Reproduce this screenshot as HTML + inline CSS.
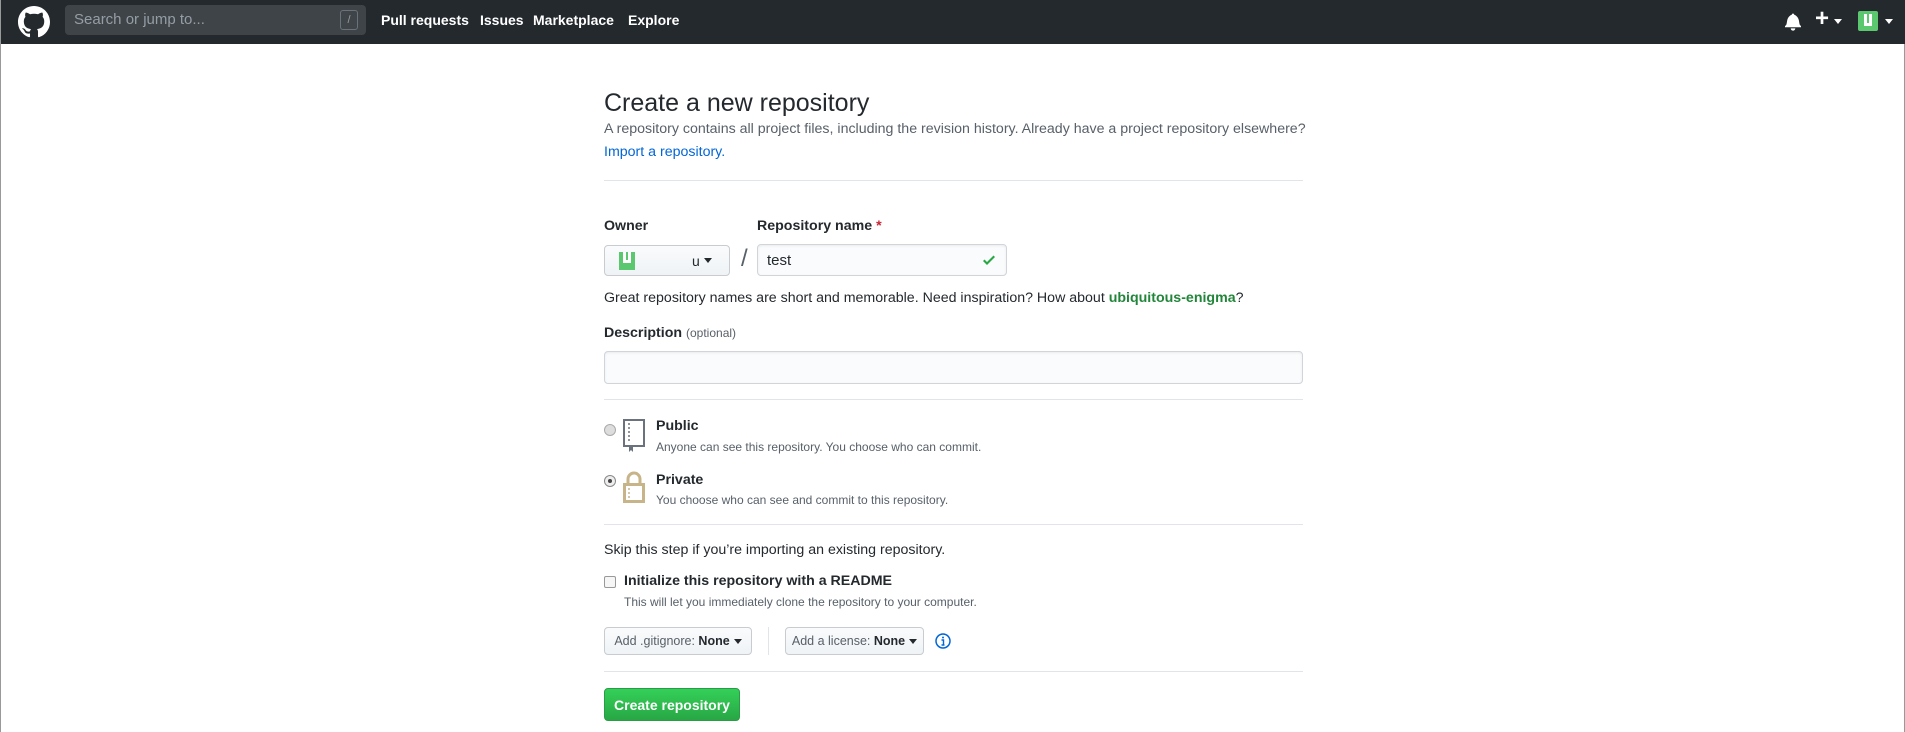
<!DOCTYPE html>
<html><head><meta charset="utf-8"><style>
*{box-sizing:border-box;margin:0;padding:0}
body{width:1905px;height:732px;overflow:hidden;background:#fff;font-family:"Liberation Sans",Arial,sans-serif;color:#24292e;position:relative;border-left:1px solid #999;border-right:1px solid #999}
.a{position:absolute;white-space:nowrap}
.hdr{position:absolute;left:0;top:0;width:1905px;height:44px;background:#24292e}
.hr{position:absolute;left:603px;width:699px;height:1px;background:#e1e4e8}
.btn{position:absolute;border:1px solid #c8ccd1;border-radius:4px;background:linear-gradient(#fafbfc,#eff3f6);font-size:14px;color:#24292e;display:flex;align-items:center;justify-content:center}
.caret{display:inline-block;border-left:4px solid transparent;border-right:4px solid transparent;border-top:5px solid #24292e;margin-left:4px}
.inp{position:absolute;border:1px solid #d1d5da;border-radius:4px;background:#fafbfc;box-shadow:inset 0 1px 2px rgba(27,31,35,.075)}
</style></head><body>
<div class="hdr"></div>
<svg class="a" style="left:17px;top:6px" width="32" height="32" viewBox="0 0 16 16"><path fill="#fff" d="M8 0C3.58 0 0 3.58 0 8c0 3.54 2.290 6.530 5.470 7.590.4.07.55-.17.55-.38 0-.19-.01-.82-.01-1.49-2.01.37-2.53-.49-2.69-.94-.09-.23-.48-.94-.82-1.130-.28-.15-.68-.52-.01-.53.63-.01 1.08.58 1.23.82.72 1.21 1.87.87 2.33.66.07-.52.28-.87.51-1.070-1.78-.2-3.64-.89-3.64-3.95 0-.87.31-1.59.82-2.15-.08-.2-.36-1.02.08-2.12 0 0 .67-.21 2.2.82.64-.18 1.32-.27 2-.27.68 0 1.36.09 2 .27 1.53-1.04 2.2-.82 2.2-.82.44 1.1.16 1.92.08 2.12.51.56.82 1.27.82 2.15 0 3.07-1.87 3.75-3.65 3.95.29.25.54.73.54 1.48 0 1.07-.01 1.93-.01 2.2 0 .21.15.46.55.38A8.013 8.013 0 0016 8c0-4.42-3.58-8-8-8z"/></svg>
<div class="a" style="left:64px;top:5px;width:301px;height:30px;background:#3f4448;border-radius:4px"></div>
<div class="a" style="left:73px;top:11px;font-size:15px;color:#959da5">Search or jump to...</div>
<div class="a" style="left:339px;top:10px;width:18px;height:20px;border:1px solid #6a737d;border-radius:3px;color:#959da5;font-size:11px;text-align:center;line-height:18px">/</div>
<div class="a" style="left:380px;top:12px;font-size:14px;font-weight:bold;color:#fff">Pull requests</div>
<div class="a" style="left:479px;top:12px;font-size:14px;font-weight:bold;color:#fff">Issues</div>
<div class="a" style="left:532px;top:12px;font-size:14px;font-weight:bold;color:#fff">Marketplace</div>
<div class="a" style="left:627px;top:12px;font-size:14px;font-weight:bold;color:#fff">Explore</div>
<svg class="a" style="left:1784px;top:12px" width="16" height="19" viewBox="0 0 14 16"><path fill="#fff" d="M13.99 11.991v1H0v-1l.73-.58c.769-.769.809-2.547 1.189-4.416.77-3.767 4.077-4.996 4.077-4.996 0-.55.45-1 .999-1 .55 0 1 .45 1 1 0 0 3.387 1.229 4.156 4.996.38 1.879.42 3.657 1.19 4.417l.659.58h-.01zM6.995 15.99c1.110 0 1.999-.89 1.999-1.999H4.996c0 1.11.89 1.999 1.999 1.999z"/></svg>
<div class="a" style="left:1814px;top:5px;font-size:24px;color:#fff;font-weight:bold">+</div>
<span class="a caret" style="left:1829px;top:19px;border-top-color:#fff"></span>
<div class="a" style="left:1857px;top:11px;width:20px;height:20px;background:#5bc870;border-radius:2px"><div style="position:absolute;left:6px;top:3px;width:8px;height:12px;border:3px solid #fff;border-top:none"></div></div>
<span class="a caret" style="left:1880px;top:19px;border-top-color:#fff"></span>

<div class="a" style="left:603px;top:89px;font-size:25px;font-weight:normal">Create a new repository</div>
<div class="a" style="left:603px;top:121px;font-size:14.2px;color:#586069">A repository contains all project files, including the revision history. Already have a project repository elsewhere?</div>
<div class="a" style="left:603px;top:144px;font-size:14.2px;color:#0366d6">Import a repository.</div>
<div class="hr" style="top:180px"></div>

<div class="a" style="left:603px;top:218px;font-size:14.2px;font-weight:bold">Owner</div>
<div class="a" style="left:756px;top:218px;font-size:14.2px;font-weight:bold">Repository name <span style="color:#cb2431">*</span></div>
<div class="btn" style="left:603px;top:245px;width:126px;height:31px;justify-content:flex-start;padding-left:14px">
<div style="width:16px;height:18px;background:#5bc870;position:relative"><div style="position:absolute;left:4px;top:0;width:8px;height:11px;border:3px solid #fff;border-top:none"></div></div>
<span style="margin-left:57px">u</span><span class="caret"></span></div>
<div class="a" style="left:740px;top:245px;font-size:24px;color:#586069">/</div>
<div class="inp" style="left:756px;top:244px;width:250px;height:32px"></div>
<div class="a" style="left:766px;top:252px;font-size:15px">test</div>
<svg class="a" style="left:980px;top:252px" width="16" height="16" viewBox="0 0 12 16"><path fill="#28a745" d="M12 5l-8 8-4-4 1.5-1.5L4 10l6.5-6.5L12 5z"/></svg>
<div class="a" style="left:603px;top:290px;font-size:14.2px">Great repository names are short and memorable. Need inspiration? How about <b style="color:#22863a">ubiquitous-enigma</b>?</div>
<div class="a" style="left:603px;top:325px;font-size:14.2px;font-weight:bold">Description <span style="font-weight:normal;font-size:12px;color:#586069">(optional)</span></div>
<div class="inp" style="left:603px;top:351px;width:699px;height:33px"></div>
<div class="hr" style="top:399px"></div>

<div class="a" style="left:603px;top:424px;width:12px;height:12px;border-radius:50%;border:1px solid #aaa;background:#ddd"></div>
<svg class="a" style="left:622px;top:419px" width="22" height="34" viewBox="0 0 22 34"><rect x="1" y="1" width="20" height="26" fill="none" stroke="#6a737d" stroke-width="2"/><path d="M6 4v2M6 8v2M6 12v2M6 16v2M6 20v2" stroke="#6a737d" stroke-width="1.5"/><path d="M6 27v6l2-2 2 2v-6" fill="#6a737d"/></svg>
<div class="a" style="left:655px;top:418px;font-size:14.2px;font-weight:bold">Public</div>
<div class="a" style="left:655px;top:440px;font-size:12px;color:#586069">Anyone can see this repository. You choose who can commit.</div>
<div class="a" style="left:603px;top:475px;width:12px;height:12px;border-radius:50%;border:1px solid #888;background:#eee"><div style="margin:3px;width:4px;height:4px;border-radius:50%;background:#444"></div></div>
<svg class="a" style="left:622px;top:471px" width="22" height="32" viewBox="0 0 22 32"><path d="M5 13V8a6 6 0 0112 0v5" fill="none" stroke="#c7b589" stroke-width="3"/><rect x="1.5" y="13.5" width="19" height="17" fill="none" stroke="#c7b589" stroke-width="3"/><path d="M6 17v2M6 21v2M6 25v2" stroke="#c7b589" stroke-width="1.5"/></svg>
<div class="a" style="left:655px;top:472px;font-size:14.2px;font-weight:bold">Private</div>
<div class="a" style="left:655px;top:493px;font-size:12px;color:#586069">You choose who can see and commit to this repository.</div>
<div class="hr" style="top:524px"></div>

<div class="a" style="left:603px;top:542px;font-size:14.2px">Skip this step if you’re importing an existing repository.</div>
<div class="a" style="left:603px;top:576px;width:12px;height:12px;border:1px solid #999;border-radius:2px;background:#f6f6f6"></div>
<div class="a" style="left:623px;top:573px;font-size:14.2px;font-weight:bold">Initialize this repository with a README</div>
<div class="a" style="left:623px;top:595px;font-size:12px;color:#586069">This will let you immediately clone the repository to your computer.</div>
<div class="btn" style="left:603px;top:627px;width:148px;height:28px;font-size:12.5px"><span style="color:#586069">Add .gitignore:&nbsp;</span><b>None</b><span class="caret"></span></div>
<div class="a" style="left:767px;top:627px;width:1px;height:28px;background:#e1e4e8"></div>
<div class="btn" style="left:784px;top:627px;width:139px;height:28px;font-size:12.5px"><span style="color:#586069">Add a license:&nbsp;</span><b>None</b><span class="caret"></span></div>
<svg class="a" style="left:934px;top:633px" width="16" height="16" viewBox="0 0 16 16"><circle cx="8" cy="8" r="7" fill="none" stroke="#0366d6" stroke-width="1.5"/><circle cx="8" cy="4.5" r="1" fill="#0366d6"/><path d="M6.5 7h2v5h1M6.5 12h3" stroke="#0366d6" stroke-width="1.4" fill="none"/></svg>
<div class="hr" style="top:671px"></div>
<div class="a" style="left:603px;top:688px;width:136px;height:33px;border-radius:4px;background:linear-gradient(#34d058,#28a745);border:1px solid #2a9c47;color:#fff;font-size:14px;font-weight:bold;display:flex;align-items:center;justify-content:center">Create repository</div>
</body></html>
